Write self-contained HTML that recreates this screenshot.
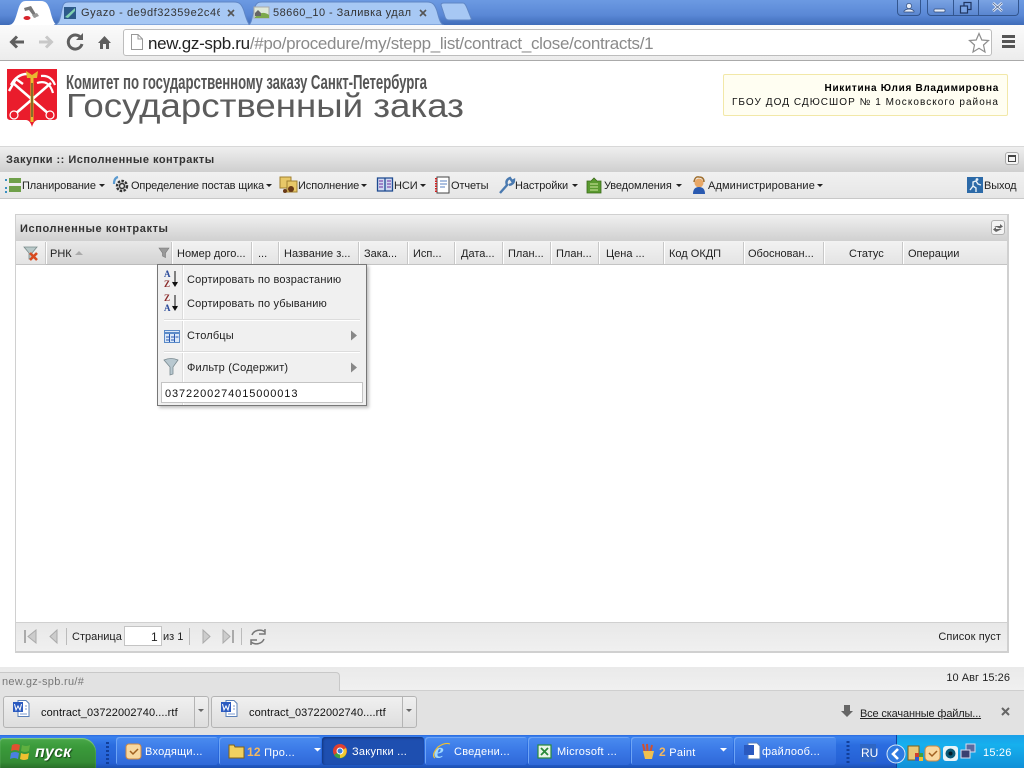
<!DOCTYPE html>
<html lang="ru"><head><meta charset="utf-8"><title>Закупки</title>
<style>
html,body{margin:0;padding:0;width:1024px;height:768px;overflow:hidden;background:#fff}
body{position:relative;font:11px "Liberation Sans","DejaVu Sans",sans-serif;color:#222}
.a,.t,svg{position:absolute}
.t{white-space:nowrap;line-height:14px}
.sep{position:absolute;top:242px;height:22px;width:2px;background:#fff;border-left:1px solid #c8c8c8;box-sizing:border-box}
.h{font-size:11px;letter-spacing:0;top:247px;color:#222}
.m{font-size:11px;letter-spacing:-.1px;top:179px;color:#222}
.mi{font-size:11px;letter-spacing:.17px;color:#222}
.tb{position:absolute;top:737px;height:28px;background:linear-gradient(#4a8cf0,#3a78e6 50%,#2f68d8);border-radius:3px;box-shadow:inset 1px 1px 0 #6ea4f5}
.tt{color:#fff;font-size:11px;letter-spacing:.25px;top:745px}
.dl{position:absolute;top:696px;height:32px;background:linear-gradient(#f0f0f0,#dedede);border:1px solid #b4b4b4;border-radius:3px;box-sizing:border-box}
</style></head><body>

<!-- browser tab strip -->
<div class="a" style="left:0;top:0;width:1024px;height:25px;background:linear-gradient(#6c9ae2,#5a88d6 60%,#3f6cb8)"></div>
<svg style="left:0;top:0" width="500" height="26"><path d="M8 25 C14 25 15 20 18 10 C20 3 22 1 26 1 L41 1 C46 1 48 4 50 10 C52 18 54 25 58 25Z" fill="#fff"/><path d="M54 25 C60 24 60 18 62 9 C63 3 65 2 69 2 L234 2 C240 2 242 5 244 11 C246 18 248 24 250 25Z" fill="#a7c8f4" stroke="#5f86c5"/><path d="M248 25 C252 24 252 16 254 9 C256 3 258 2 262 2 L427 2 C433 2 435 5 437 11 C439 18 440 24 444 25Z" fill="#a7c8f4" stroke="#5f86c5"/><path d="M441 5 Q441 3 444 3 L463 3 Q465 3 467 8 L471 18 Q472 20 469 20 L449 20 Q446 20 445 17Z" fill="#a7c8f4" stroke="#5f86c5"/>
<path d="M24 8 L31 6 L37 16 L35 18 L29 10 L25 11Z" fill="#777"/><path d="M32 15 l5 -2 l2 3 l-5 2Z" fill="#999"/><ellipse cx="27" cy="18" rx="3.5" ry="2" fill="#d8252c"/>
<rect x="64" y="7" width="12" height="12" fill="#2d5a8a"/><path d="M65 17 L75 8 V11 L68 18Z" fill="#7fd0b0"/>
<rect x="254" y="7" width="15" height="11" fill="#dfe8d8" stroke="#aaa"/><path d="M255 17 Q262 10 269 15 V18 H255Z" fill="#7ca84a"/><path d="M255 13 l3 -3 l3 3 v3 h-6Z" fill="#666"/>
<path d="M228 10 l6 6 M234 10 l-6 6 M420 10 l6 6 M426 10 l-6 6" stroke="#555" stroke-width="1.6"/></svg>
<div class="t" style="left:81px;top:6px;width:139px;overflow:hidden;font-size:11px;letter-spacing:.55px;color:#333">Gyazo - de9df32359e2c4635</div>
<div class="t" style="left:273px;top:6px;width:139px;overflow:hidden;font-size:11px;letter-spacing:.45px;color:#333">58660_10 - Заливка удалас</div>
<!-- window buttons -->
<div class="a" style="left:897px;top:0;width:24px;height:16px;border:1px solid #33568f;border-top:0;border-radius:0 0 4px 4px;box-sizing:border-box;background:linear-gradient(#7aa3e3,#5a86d0)"></div>
<div class="a" style="left:927px;top:0;width:92px;height:16px;border:1px solid #33568f;border-top:0;border-radius:0 0 4px 4px;box-sizing:border-box;background:linear-gradient(#7aa3e3,#5a86d0)"></div>
<svg style="left:895px;top:0" width="125" height="17"><path d="M58.500 0 V16 M83.500 0 V16" stroke="#33568f"/><circle cx="14" cy="6" r="2.6" fill="#e8eef8" stroke="#2f4a7a" stroke-width=".7"/><path d="M9 12 h10 v-1 q-2 -2 -5 -2 q-3 0 -5 2Z" fill="#e8eef8" stroke="#2f4a7a" stroke-width=".7"/><rect x="39" y="9" width="11" height="3" rx="1" fill="#e8eef8" stroke="#2f4a7a" stroke-width=".7"/><rect x="69" y="2.500" width="7" height="7" fill="none" stroke="#1f3560" stroke-width="1.200"/><rect x="65.500" y="6" width="7" height="7" fill="#7aa3e3" stroke="#1f3560" stroke-width="1.200"/><path d="M98 3 l9 8 M107 3 l-9 8" stroke="#e8eef8" stroke-width="2.600"/><path d="M98 3 l9 8 M107 3 l-9 8" stroke="#2f4a7a" stroke-width=".6"/></svg>

<!-- browser toolbar -->
<div class="a" style="left:0;top:25px;width:1024px;height:35px;background:linear-gradient(#fbfbfb,#ececec);border-bottom:1px solid #aaa;box-sizing:content-box"></div>
<div class="a" style="left:123px;top:29px;width:869px;height:27px;background:#fff;border:1px solid #bdbdbd;border-radius:3px;box-sizing:border-box"></div>
<svg style="left:0;top:25px" width="125" height="35"><path d="M24 17 H12 M17 11.500 L11.500 17 L17 22.500" fill="none" stroke="#5f5f5f" stroke-width="3"/><path d="M39 17 H51 M46 11.500 L51.500 17 L46 22.500" fill="none" stroke="#c8c8c8" stroke-width="3"/><path d="M81 13 A7 7 0 1 0 82 19" fill="none" stroke="#5f5f5f" stroke-width="3"/><path d="M83 8 V15 H76Z" fill="#5f5f5f"/><path d="M98 18 L104.500 11 L111 18 H109 V24 H106 V19 H103 V24 H100 V18Z" fill="#5f5f5f"/></svg>
<svg style="left:128px;top:31px" width="18" height="22"><path d="M3.500 3.500 H10 L14.500 8 V18.500 H3.500Z M10 3.500 V8 H14.500" fill="#fff" stroke="#999"/></svg>
<div class="t" style="left:148px;top:34px;line-height:20px;font-size:17px;letter-spacing:-.31px;color:#222">new.gz-spb.ru<span style="color:#8a8a8a">/#po/procedure/my/stepp_list/contract_close/contracts/1</span></div>
<svg style="left:968px;top:31px" width="56" height="24"><path d="M11 2.500 L13.800 9 L20.500 9.500 L15.500 14 L17 21 L11 17.300 L5 21 L6.500 14 L1.500 9.500 L8.200 9Z" fill="#fff" stroke="#8d8d8d" stroke-width="1.200"/><path d="M34 5.500 H47 M34 10.500 H47 M34 15.500 H47" stroke="#555" stroke-width="3"/></svg>

<!-- site header -->
<svg style="left:7px;top:69px" width="50" height="59" viewBox="0 0 50 59"><path d="M0 0 H50 V48 Q50 51 46 51 H31 Q27 51 25 58 Q23 51 19 51 H4 Q0 51 0 48Z" fill="#ea1c2c"/><path d="M6 14 L43 46 M44 14 L7 46" stroke="#fff" stroke-width="2.600"/><path d="M4 16 Q10 5 20 5 M2 22 L9 10 L16 15" fill="none" stroke="#fff" stroke-width="2.400"/><path d="M34 7 Q44 6 48 16 M30 14 Q42 10 46 24" fill="none" stroke="#fff" stroke-width="2.200"/><circle cx="7" cy="46" r="4" fill="#ea1c2c" stroke="#fff" stroke-width="1.200"/><circle cx="43" cy="46" r="4" fill="#ea1c2c" stroke="#fff" stroke-width="1.200"/><rect x="23.500" y="8" width="3" height="45" fill="#e8c030"/><rect x="24.300" y="14" width="1.400" height="34" fill="#222" opacity=".7"/><path d="M19 2 L25 6 L31 2 L30 9 H20Z" fill="#e8b830"/></svg>
<div class="t" style="left:66px;top:72px;line-height:22px;font-size:20px;font-weight:bold;color:#555;transform-origin:0 0;transform:scaleX(.66);letter-spacing:-.1px">Комитет по государственному заказу Санкт-Петербурга</div>
<div class="t" style="left:66px;top:86px;line-height:40px;font-size:33px;color:#5c5c5c;letter-spacing:0;transform-origin:0 0;transform:scaleX(1.11)">Государственный заказ</div>

<div class="a" style="left:723px;top:74px;width:285px;height:42px;background:#fffef2;border:1px solid #f2e8a8;border-radius:2px;box-sizing:border-box"></div>
<div class="t" style="right:25px;top:82px;font-size:10px;font-weight:bold;letter-spacing:.7px;color:#000">Никитина Юлия Владимировна</div>
<div class="t" style="right:25px;top:96px;font-size:10px;letter-spacing:1.05px;color:#111">ГБОУ ДОД СДЮСШОР № 1 Московского района</div>

<!-- app panel header -->
<div class="a" style="left:0;top:146px;width:1024px;height:26px;background:linear-gradient(#efefef,#cfcfcf);border-top:1px solid #d8d8d8;box-sizing:border-box"></div>
<div class="t" style="left:6px;top:153px;font-weight:bold;font-size:11px;letter-spacing:.49px;color:#333">Закупки :: Исполненные контракты</div>
<div class="a" style="left:1005px;top:152px;width:14px;height:13px;background:#f4f4f4;border:1px solid #aaa;border-radius:3px;box-sizing:border-box"></div>
<div class="a" style="left:1008px;top:155px;width:8px;height:7px;border:1px solid #444;border-top-width:2px;box-sizing:border-box"></div>

<!-- menu bar -->
<div class="a" style="left:0;top:172px;width:1024px;height:26px;background:linear-gradient(#f1f1f1,#e6e6e6);border-bottom:1px solid #c8c8c8;box-sizing:content-box"></div>
<svg style="left:0;top:172px" width="1024" height="27">
<rect x="9" y="6" width="12" height="5" fill="#6fa04a"/><rect x="9" y="14" width="12" height="6" fill="#6fa04a"/><rect x="5" y="7" width="2" height="2" fill="#3a90c0"/><rect x="5" y="15" width="2" height="2" fill="#3a90c0"/><rect x="5" y="19" width="2" height="2" fill="#3a90c0"/>
<circle cx="122" cy="14" r="5" fill="none" stroke="#333" stroke-width="2.400" stroke-dasharray="2.500 1.300"/><circle cx="122" cy="14" r="2.500" fill="none" stroke="#333" stroke-width="1.500"/><path d="M114 12 Q114 6 118 5" fill="none" stroke="#5a9ad0" stroke-width="2.200"/>
<rect x="280" y="5" width="11" height="11" fill="#e8c868" stroke="#a08030"/><rect x="287" y="9" width="10" height="11" fill="#e8c868" stroke="#a08030"/><circle cx="291" cy="17" r="3" fill="#6a3a18"/><circle cx="285" cy="19" r="2" fill="#6a3a18"/>
<path d="M377.500 6 H385 V19 H377.500Z M385 6 H392.500 V19 H385Z" fill="#d0d8f0" stroke="#1d4a90" stroke-width="1.300"/><path d="M379 9 h4 M379 12 h4 M379 15 h4 M387 9 h4 M387 12 h4 M387 15 h4" stroke="#7030a0"/>
<rect x="437" y="5" width="12" height="16" fill="#fff" stroke="#444"/><path d="M436 6 v14" stroke="#d02020" stroke-width="2" stroke-dasharray="1.500 1"/><path d="M440 9 h7 M440 12 h7 M440 15 h5" stroke="#5a80c0"/>
<path d="M500 21 L508 12 M507 13 Q505 8 510 6 L512 9 L514 8 Q514 12 509 13" fill="none" stroke="#4a7ab0" stroke-width="2.400"/>
<path d="M587 9 h4 l3 -3 l3 3 h4 v12 h-14Z" fill="#5a9a30" stroke="#3a6a18" stroke-width=".8"/><path d="M590 12 h8 M590 15 h8 M590 18 h8" stroke="#d0e8a0"/>
<circle cx="699" cy="11" r="4.500" fill="#e8a868"/><path d="M693 22 Q693 15 699 15 Q705 15 705 22Z" fill="#2a5ab0"/><path d="M694 10 Q695 4 699 5 Q704 5 704 10" fill="none" stroke="#a07030" stroke-width="1.500"/>
<rect x="967" y="5" width="16" height="16" fill="#2c6aa8"/><path d="M970 18 l3 -4 l0 -4 l3 -1 l2 3 l3 1 M973 14 l3 2 l0 4" fill="none" stroke="#e6f0f8" stroke-width="1.400"/><circle cx="977" cy="7.500" r="1.400" fill="#e6f0f8"/>
<path d="M99 12 h6 l-3 3Z M266 12 h6 l-3 3Z M361 12 h6 l-3 3Z M420 12 h6 l-3 3Z M572 12 h6 l-3 3Z M676 12 h6 l-3 3Z M817 12 h6 l-3 3Z" fill="#222"/>
</svg>
<div class="t m" style="left:22px">Планирование</div>
<div class="t m" style="left:131px;letter-spacing:-.15px">Определение постав щика</div>
<div class="t m" style="left:298px">Исполнение</div>
<div class="t m" style="left:394px">НСИ</div>
<div class="t m" style="left:451px">Отчеты</div>
<div class="t m" style="left:515px">Настройки</div>
<div class="t m" style="left:604px">Уведомления</div>
<div class="t m" style="left:708px;letter-spacing:.12px">Администрирование</div>
<div class="t m" style="left:984px">Выход</div>

<!-- grid panel -->
<div class="a" style="left:15px;top:214px;width:994px;height:439px;border:2px solid #d0d0d0;border-width:1px 2px 2px 1px;box-sizing:border-box;background:#fff"></div>
<div class="a" style="left:16px;top:215px;width:991px;height:26px;background:linear-gradient(#f0f0f0,#d0d0d0)"></div>
<div class="t" style="left:20px;top:222px;font-weight:bold;font-size:11px;letter-spacing:.6px;color:#333">Исполненные контракты</div>
<div class="a" style="left:991px;top:220px;width:14px;height:15px;background:#f4f4f4;border:1px solid #b0b0b0;border-radius:3px;box-sizing:border-box"></div>
<svg style="left:992px;top:222px" width="12" height="11"><path d="M2 4 H8 V2 L11 4.500 L8 6.500Z M10 7 H4 V5 L1 7.500 L4 10Z" fill="#666"/></svg>

<div class="a" style="left:16px;top:241px;width:991px;height:24px;background:linear-gradient(#f2f2f2,#e4e4e4);border-bottom:1px solid #c4c4c4;box-sizing:border-box"></div>
<div class="a" style="left:46px;top:241px;width:125px;height:24px;background:linear-gradient(#e8e8e8,#d4d4d4);border-bottom:1px solid #bbb;box-sizing:border-box"></div>
<div class="sep" style="left:45px"></div><div class="sep" style="left:171px"></div><div class="sep" style="left:251px"></div><div class="sep" style="left:278px"></div><div class="sep" style="left:358px"></div><div class="sep" style="left:407px"></div><div class="sep" style="left:454px"></div><div class="sep" style="left:502px"></div><div class="sep" style="left:550px"></div><div class="sep" style="left:598px"></div><div class="sep" style="left:663px"></div><div class="sep" style="left:743px"></div><div class="sep" style="left:823px"></div><div class="sep" style="left:902px"></div>
<svg style="left:22px;top:246px" width="20" height="16"><path d="M2 1 H15 L10 7 V12 L7 13 V7Z" fill="#b8c8c8" stroke="#7a8a8a" stroke-width=".8"/><path d="M8 7 L15 14 M15 7 L8 14" stroke="#d84a20" stroke-width="2.600"/></svg>
<div class="t h" style="left:50px">РНК</div>
<svg style="left:73px;top:247px" width="105" height="12"><path d="M2 8 H10 L6 4Z" fill="#aaa"/><path d="M86 1 H96 L92.500 6 V10.500 L89.500 9 V6Z" fill="#999" stroke="#777" stroke-width=".6"/></svg>
<div class="t h" style="left:177px">Номер дого...</div>
<div class="t h" style="left:258px">...</div>
<div class="t h" style="left:284px">Название з...</div>
<div class="t h" style="left:364px">Зака...</div>
<div class="t h" style="left:413px">Исп...</div>
<div class="t h" style="left:461px">Дата...</div>
<div class="t h" style="left:508px">План...</div>
<div class="t h" style="left:556px">План...</div>
<div class="t h" style="left:606px">Цена ...</div>
<div class="t h" style="left:669px">Код ОКДП</div>
<div class="t h" style="left:748px">Обоснован...</div>
<div class="t h" style="left:849px">Статус</div>
<div class="t h" style="left:908px">Операции</div>

<!-- context menu -->
<div class="a" style="left:157px;top:264px;width:210px;height:142px;background:#f0f0f0;border:1px solid #777;box-sizing:border-box;box-shadow:2px 2px 3px rgba(0,0,0,.25)"></div>
<div class="a" style="left:182px;top:265px;width:2px;height:140px;background:#fff;border-left:1px solid #dcdcdc;box-sizing:border-box"></div>
<div class="a" style="left:164px;top:319px;width:196px;height:2px;background:#fff;border-top:1px solid #dcdcdc;box-sizing:border-box"></div>
<div class="a" style="left:164px;top:351px;width:196px;height:2px;background:#fff;border-top:1px solid #dcdcdc;box-sizing:border-box"></div>
<svg style="left:160px;top:268px" width="24" height="112">
<text x="4" y="9" font-family="Liberation Serif" font-weight="bold" font-size="9" fill="#2a4a9a">A</text><text x="4" y="19" font-family="Liberation Serif" font-weight="bold" font-size="9" fill="#8a2a2a">Z</text><path d="M15 3 V17 M12.500 14 L15 18 L17.500 14" fill="#111" stroke="#111"/>
<text x="4" y="33" font-family="Liberation Serif" font-weight="bold" font-size="9" fill="#8a2a2a">Z</text><text x="4" y="43" font-family="Liberation Serif" font-weight="bold" font-size="9" fill="#2a4a9a">A</text><path d="M15 27 V41 M12.500 38 L15 42 L17.500 38" fill="#111" stroke="#111"/>
<rect x="4.500" y="62.500" width="15" height="12" fill="#dbe8f8" stroke="#5a8ac8"/><path d="M5 65 h14" stroke="#5a8ac8" stroke-width="2"/><path d="M9.500 66 v8 M14.500 66 v8" stroke="#2a5ab0"/><path d="M6 69 h3 M6 72 h3 M11 69 h3 M11 72 h3 M15.500 69 h3" stroke="#2a5ab0"/>
<path d="M4 92 Q11 89 18 92 L13 99 V106 L10 107 V99Z" fill="#b8c8d0" stroke="#7a8a90" stroke-width=".8"/>
</svg>
<div class="t mi" style="left:187px;top:273px">Сортировать по возрастанию</div>
<div class="t mi" style="left:187px;top:297px">Сортировать по убыванию</div>
<div class="t mi" style="left:187px;top:329px">Столбцы</div>
<div class="t mi" style="left:187px;top:361px">Фильтр (Содержит)</div>
<svg style="left:350px;top:330px" width="8" height="44"><path d="M1 0.500 L7 5.500 L1 10.500Z M1 32.500 L7 37.500 L1 42.500Z" fill="#888"/></svg>
<div class="a" style="left:161px;top:382px;width:202px;height:21px;background:#fff;border:1px solid #c4c4c4;box-sizing:border-box"></div>
<div class="t" style="left:165px;top:387px;font-size:11px;letter-spacing:.9px;color:#111">0372200274015000013</div>

<!-- grid footer -->
<div class="a" style="left:16px;top:622px;width:991px;height:29px;background:linear-gradient(#e8e8e8,#f0f0f0);border-top:1px solid #d0d0d0;box-sizing:border-box"></div>
<svg style="left:16px;top:624px" width="260" height="26"><path d="M9 6 V19" stroke="#aaa" stroke-width="2"/><path d="M20 6 L12 12.500 L20 19Z M41 6 L34 12.500 L41 19Z" fill="#ccc" stroke="#aaa"/><path d="M50.500 4 V21 M173.500 4 V21 M225.500 4 V21" stroke="#bbb"/><path d="M187 6 L194 12.500 L187 19Z M207 6 L214 12.500 L207 19Z" fill="#ccc" stroke="#aaa"/><path d="M217 6 V19" stroke="#aaa" stroke-width="2"/><path d="M236 11 A8 7 0 0 1 249 8 M249 5 V10 H243 M248 15 A8 7 0 0 1 235 18 M235 21 V16 H241" fill="none" stroke="#777" stroke-width="1.500"/></svg>
<div class="t" style="left:72px;top:630px">Страница</div>
<div class="a" style="left:124px;top:626px;width:38px;height:20px;background:#fff;border:1px solid #c4c4c4;box-sizing:border-box"></div>
<div class="t" style="left:151px;top:630px;font-size:12px">1</div>
<div class="t" style="left:163px;top:630px">из 1</div>
<div class="t" style="right:23px;top:630px;letter-spacing:.1px;color:#222">Список пуст</div>

<!-- bottom strip -->
<div class="a" style="left:0;top:667px;width:1024px;height:24px;background:linear-gradient(#eaeaea,#f0f0f0);border-bottom:1px solid #cfcfcf;box-sizing:border-box"></div>
<div class="a" style="left:-2px;top:672px;width:342px;height:20px;background:#e2e2e2;border:1px solid #c8c8c8;border-bottom:0;border-radius:0 4px 0 0;box-sizing:border-box"></div>
<div class="t" style="left:2px;top:675px;letter-spacing:.3px;color:#777">new.gz-spb.ru/#</div>
<div class="t" style="right:14px;top:671px;letter-spacing:.05px;color:#222">10 Авг 15:26</div>

<!-- downloads shelf -->
<div class="a" style="left:0;top:691px;width:1024px;height:44px;background:#e2e2e2"></div>
<div class="dl" style="left:3px;width:206px"></div><div class="a" style="left:194px;top:697px;width:1px;height:30px;background:#b4b4b4"></div>
<div class="dl" style="left:211px;width:206px"></div><div class="a" style="left:402px;top:697px;width:1px;height:30px;background:#b4b4b4"></div>
<svg style="left:0;top:696px" width="420" height="32"><g><path d="M18 4.500 H26 L29 7.500 V20.500 H18Z" fill="#fff" stroke="#5a80b8"/><rect x="13" y="6" width="10" height="10" fill="#2a5ac0"/><path d="M14.500 8 L16 14 L18 10 L20 14 L21.500 8" fill="none" stroke="#fff" stroke-width="1"/><path d="M25 10 h2 M25 13 h2 M20 18 h7" stroke="#7a9ad0"/></g><g transform="translate(208 0)"><path d="M18 4.500 H26 L29 7.500 V20.500 H18Z" fill="#fff" stroke="#5a80b8"/><rect x="13" y="6" width="10" height="10" fill="#2a5ac0"/><path d="M14.500 8 L16 14 L18 10 L20 14 L21.500 8" fill="none" stroke="#fff" stroke-width="1"/><path d="M25 10 h2 M25 13 h2 M20 18 h7" stroke="#7a9ad0"/></g><path d="M198 13 h6 l-3 3Z M406 13 h6 l-3 3Z" fill="#666"/></svg>
<div class="t" style="left:41px;top:706px;letter-spacing:.08px;color:#111">contract_03722002740....rtf</div>
<div class="t" style="left:249px;top:706px;letter-spacing:.08px;color:#111">contract_03722002740....rtf</div>
<svg style="left:840px;top:704px" width="14" height="16"><path d="M4 1 H10 V7 H13 L7 13 L1 7 H4Z" fill="#666"/></svg>
<div class="t" style="left:860px;top:707px;letter-spacing:-.15px;text-decoration:underline;color:#222">Все скачанные файлы...</div>
<svg style="left:1000px;top:706px" width="12" height="12"><path d="M2 2 L9 9 M9 2 L2 9" stroke="#666" stroke-width="2"/></svg>

<!-- taskbar -->
<div class="a" style="left:0;top:735px;width:1024px;height:33px;background:linear-gradient(#2a6ae0 0,#3b82ee 6%,#2b6de0 30%,#2560d4 85%,#1c4fb0)"></div>
<div class="a" style="left:0;top:738px;width:96px;height:30px;background:linear-gradient(#4aa84a,#3a9a3a 30%,#358c35 80%,#2a702a);border-radius:3px 14px 0 0;box-shadow:inset 0 1px 1px #8ad08a"></div>
<svg style="left:10px;top:742px" width="22" height="20"><path d="M2 3 Q6 1 10 3 L9 9 Q5 7 1 9Z" fill="#e05030"/><path d="M12 3 Q16 5 20 3 L19 9 Q15 11 11 9Z" fill="#60b040"/><path d="M1 11 Q5 9 9 11 L8 17 Q4 15 0 17Z" fill="#4a80e0"/><path d="M11 11 Q15 13 19 11 L18 17 Q14 19 10 17Z" fill="#f0c030"/></svg>
<div class="t" style="left:35px;top:744px;color:#fff;font-size:16px;line-height:18px;font-style:italic;font-weight:bold;letter-spacing:.2px;text-shadow:1px 1px 1px #1a4a1a">пуск</div>
<svg style="left:104px;top:741px" width="8" height="24"><path d="M3.500 1 v22" stroke="#123f9a" stroke-width="3" stroke-dasharray="2 2"/></svg>

<div class="tb" style="left:116px;width:102px"></div>
<div class="tb" style="left:219px;width:102px"></div>
<div class="tb" style="left:322px;width:102px;background:#1e4fb0;box-shadow:inset 1px 1px 2px #12357e"></div>
<div class="tb" style="left:425px;width:102px"></div>
<div class="tb" style="left:528px;width:102px"></div>
<div class="tb" style="left:631px;width:102px"></div>
<div class="tb" style="left:734px;width:102px"></div>

<svg style="left:0;top:735px" width="1024" height="33">
<rect x="126" y="9" width="15" height="15" rx="3" fill="#f8d8a0" stroke="#d08840"/><path d="M130 16 l3 3 l5 -5" fill="none" stroke="#a06020" stroke-width="1.500"/>
<path d="M229 10 h5 l1 2 h9 v11 h-15Z" fill="#f0d060" stroke="#806018"/>
<circle cx="340" cy="16" r="7" fill="#e04030"/><path d="M340 16 L346 20 A7 7 0 0 1 334 20Z" fill="#40a040"/><path d="M340 16 L346 13 A7 7 0 0 1 340 23Z" fill="#f0c830"/><circle cx="340" cy="16" r="3" fill="#3a80e0" stroke="#fff"/>
<text x="434" y="23" font-family="Liberation Serif" font-style="italic" font-weight="bold" font-size="22" fill="#9fd8ff">e</text><path d="M435 23 Q431 20 438 12 Q445 7 450 9" fill="none" stroke="#f0c030" stroke-width="1.200"/>
<rect x="538" y="10" width="13" height="13" fill="#e8f4e8" stroke="#2a8a3a" stroke-width="1.200"/><path d="M541 13 l7 7 M548 13 l-7 7" stroke="#2a8a3a" stroke-width="1.800"/>
<path d="M643 9 l3 14 M647 9 l1 14 M652 10 l-3 13" stroke="#d05030" stroke-width="2"/><path d="M643 16 h11 l-2 8 h-7Z" fill="#f0c050"/>
<path d="M748 8 h9 l3 3 v13 h-12Z" fill="#fff" stroke="#5a80b8"/><rect x="744" y="10" width="10" height="10" fill="#2a5ac0"/>
<path d="M848 6 v24" stroke="#123f9a" stroke-width="3" stroke-dasharray="2 2"/>
<path d="M314 13 h7 l-3.500 3.500Z M720 13 h7 l-3.500 3.500Z" fill="#fff"/>
</svg>
<div class="t tt" style="left:145px">Входящи...</div>
<div class="t tt" style="left:247px"><b style="color:#f4b860;font-size:12px">12</b> Про...</div>
<div class="t tt" style="left:352px">Закупки ...</div>
<div class="t tt" style="left:454px">Сведени...</div>
<div class="t tt" style="left:557px">Microsoft ...</div>
<div class="t tt" style="left:659px"><b style="color:#f4b860;font-size:12px">2</b> Paint</div>
<div class="t tt" style="left:762px">файлооб...</div>

<div class="a" style="left:860px;top:744px;width:16px;height:18px;background:#2e66c4"></div>
<div class="t" style="left:861px;top:746px;color:#fff;font-size:12px">RU</div>
<div class="a" style="left:896px;top:735px;width:128px;height:33px;background:linear-gradient(#1aa0e8,#16b0ee 30%,#1090d8);border-left:1px solid #123f9a;box-sizing:border-box"></div>
<svg style="left:883px;top:738px" width="100" height="28">
<circle cx="13" cy="16" r="9" fill="#2f7ae0" stroke="#d8e8f8"/><path d="M15 11 L10 16 L15 21" fill="none" stroke="#fff" stroke-width="2.600"/>
<rect x="25" y="8" width="11" height="14" fill="#e8c878" stroke="#806018"/><rect x="32" y="15" width="4" height="4" fill="#d04030"/><rect x="36" y="15" width="4" height="4" fill="#40a040"/><rect x="32" y="19" width="4" height="4" fill="#3060d0"/><rect x="36" y="19" width="4" height="4" fill="#f0c030"/>
<rect x="42" y="8" width="15" height="15" rx="4" fill="#f8d8a0" stroke="#d08840"/><path d="M46 15 l3 3 l5 -5" fill="none" stroke="#a06020" stroke-width="1.500"/>
<rect x="60" y="8" width="15" height="15" rx="3" fill="#e8f4f8"/><circle cx="67.500" cy="15.500" r="5" fill="#0a5a78"/><circle cx="67.500" cy="15.500" r="2" fill="#021a28"/>
<rect x="83" y="6" width="9" height="8" fill="#5a6aa0" stroke="#d8dcf0"/><rect x="78" y="12" width="9" height="8" fill="#3a4070" stroke="#d8dcf0"/>
</svg>
<div class="t" style="left:983px;top:746px;color:#fff;font-size:11px;letter-spacing:.2px">15:26</div>

</body></html>
